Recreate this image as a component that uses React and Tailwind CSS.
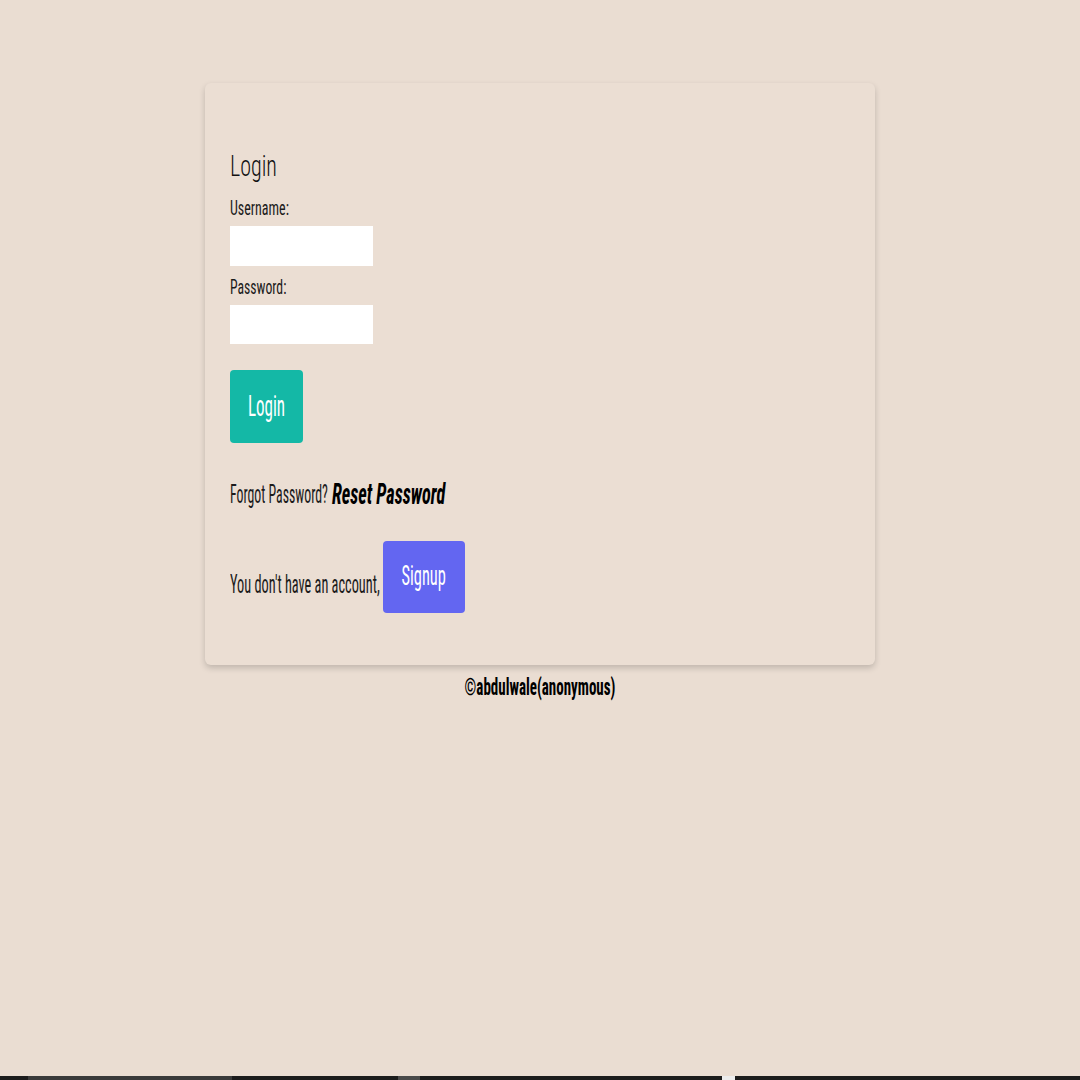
function Line({ h, mt, className, children }) {
  return (
    <div className={`flex items-center ${h} ${mt}`}>
      <span className={`inline-block leading-none origin-center ${className}`}>
        {children}
      </span>
    </div>
  );
}

export default function App() {
  return (
    <div className="h-[1080px] flex flex-col bg-[#eaddd2] font-['Roboto_Condensed',sans-serif] text-[#1b1b1b]">
      <div className="flex-1 flex flex-col items-center pt-[83px]">
        <div className="w-[670px] rounded-md bg-[#ebded3] shadow-[0_3px_6px_rgba(0,0,0,0.18)] px-[25px] pt-[67px] pb-[52px]">
          <Line h="h-[31px]" mt="mt-0" className="text-[22px] font-light scale-y-[1.36] text-[#111]">
            Login
          </Line>
          <Line h="h-[15px]" mt="mt-[18px]" className="text-[14px] scale-y-[1.5]">
            Username:
          </Line>
          <input type="text" className="block mt-[12px] w-[143px] h-[40px] bg-white outline-none" />
          <Line h="h-[15px]" mt="mt-[14px]" className="text-[13.7px] scale-y-[1.5]">
            Password:
          </Line>
          <input type="password" className="block mt-[10px] w-[143px] h-[39px] bg-white outline-none" />
          <button className="mt-[26px] w-[73px] h-[73px] rounded bg-[#14b8a6] text-white flex items-center justify-center">
            <span className="inline-block leading-none text-[17px] scale-y-[1.7]">Login</span>
          </button>
          <div className="mt-[42px] h-[19px] flex items-center">
            <span className="inline-block leading-none text-[13.8px] scale-y-[1.9]">Forgot Password?</span>
            <a className="ml-[4px] inline-block leading-none text-[18.3px] font-bold italic text-black scale-y-[1.6]">
              Reset Password
            </a>
          </div>
          <div className="mt-[37px] flex items-start">
            <div className="mt-[34px] h-[18px] flex items-center">
              <span className="inline-block leading-none text-[14.3px] scale-y-[1.75]">
                You don't have an account,
              </span>
            </div>
            <button className="ml-[3px] w-[82px] h-[72px] rounded bg-[#6366f1] text-white flex items-center justify-center">
              <span className="inline-block leading-none text-[16.4px] scale-y-[1.63]">Signup</span>
            </button>
          </div>
        </div>
        <div className="mt-[13px] h-[19px] flex items-center">
          <span className="inline-block leading-none text-[15px] font-bold text-black scale-y-[1.6]">
            ©abdulwale(anonymous)
          </span>
        </div>
      </div>
      <div className="h-[4px] flex">
        <div className="w-[28px] bg-[#1c1c1c]" />
        <div className="w-[204px] bg-[#3a3a3a]" />
        <div className="w-[166px] bg-[#1c1c1c]" />
        <div className="w-[22px] bg-[#4a4a4a]" />
        <div className="w-[302px] bg-[#1c1c1c]" />
        <div className="w-[13px] bg-[#ececec]" />
        <div className="flex-1 bg-[#1c1c1c]" />
      </div>
    </div>
  );
}
